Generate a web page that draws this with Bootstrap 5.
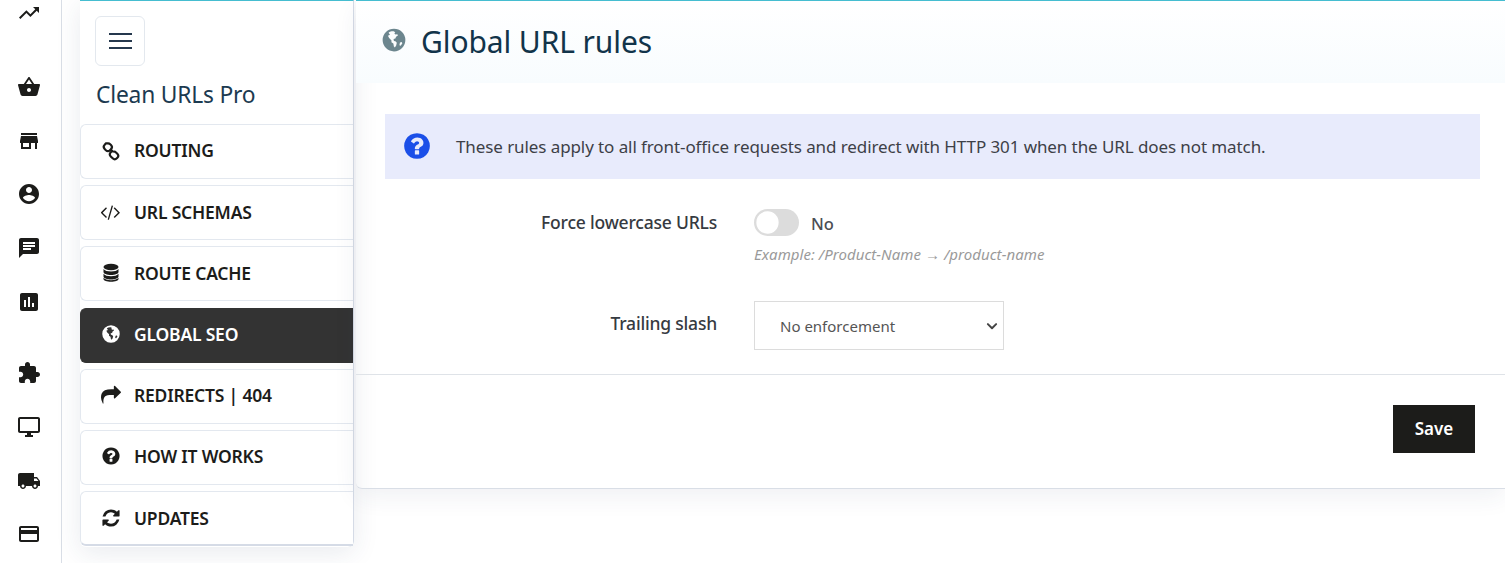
<!DOCTYPE html>
<html lang="en">
<head>
    <meta charset="UTF-8">
    <meta name="viewport" content="width=device-width, initial-scale=1.0">
    <title>Clean URLs Pro</title>
    <link href="https://cdn.jsdelivr.net/npm/bootstrap@5.3.0/dist/css/bootstrap.min.css" rel="stylesheet">
    <style>
        html, body { height: 563px; overflow: hidden; }
        body {
            font-family: "Noto Sans", "Open Sans", sans-serif;
            background: #fff;
            color: #363a41;
        }
        .rail {
            width: 62px;
            height: 563px;
            border-right: 1px solid #d9dee6;
            padding: 1px 3px 0 0;
        }
        .rail-item { height: 53.7px; color: #1c1c1a; flex: none; }
        .rail-item svg { width: 24px; height: 24px; fill: currentColor; }
        .rail-item.first { height: 27px; align-items: flex-start !important; }
        .rail-item.group-a { margin-top: 32px; }
        .rail-item.group-b { margin-top: 18px; }
        .side {
            width: 274px;
            margin-left: 18px;
            height: 547px;
            border-top: 1px solid #45bdd0;
            border-right: 1px solid #d5dbe6;
            border-radius: 0 0 6px 6px;
            box-shadow: 0 6px 26px rgba(40, 60, 100, .10);
            flex: none;
        }
        .burger {
            width: 50px;
            height: 50px;
            margin: 15px 0 0 15px;
            border: 1px solid #e3e8ee;
            border-radius: 6px;
            background: #fff;
        }
        .burger span { display: block; width: 23px; height: 2px; background: #25384d; margin: 2.5px auto; }
        .side-title {
            font-size: 22.8px;
            font-weight: 400;
            color: #1c3a50;
            margin: 13px 0 13px 16px;
            line-height: 32px;
            letter-spacing: -.2px;
        }
        .side-link {
            height: 55px;
            margin-bottom: 6.2px;
            padding: 0 0 2px 20px;
            border: 1px solid #e3e8ef;
            border-right: 0;
            border-radius: 6px 0 0 6px;
            background: #fff;
            color: #1c1c1a;
            font-size: 17.5px;
            font-weight: 600;
            text-decoration: none;
            letter-spacing: -.2px;
        }
        .side-link svg { width: 20px; height: 20px; fill: currentColor; margin-right: 13px; flex: none; }
        .side-link.active { background: #333; border-color: #333; color: #fff; }
        .side-link:last-child { margin-bottom: 0; padding-bottom: 0; border-bottom-width: 2px; border-bottom-color: #d5dbe6; }
        .main {
            height: 489px;
            margin-left: 2px;
            border-top: 1px solid #45bdd0;
            border-bottom: 1px solid #d9dee6;
            border-radius: 0 0 0 6px;
            box-shadow: 0 8px 24px rgba(40, 60, 100, .07);
            min-width: 0;
        }
        .main-head {
            height: 82px;
            padding-left: 25px;
            background: linear-gradient(#fff, #f8fcfe);
        }
        .main-head svg { width: 26px; height: 26px; fill: #6c868e; margin-right: 14px; margin-top: -4px; }
        .main-head h1 {
            font-size: 30px;
            font-weight: 400;
            color: #12344a;
            margin: 0;
            letter-spacing: -.1px;
        }
        .note {
            margin: 31px 25px 0 29px;
            height: 65px;
            background: #e8ebfc;
            border: 0;
            border-radius: 0;
            padding: 0 0 0 17px;
            font-size: 17px;
            color: #3d4047;
            letter-spacing: -.09px;
        }
        .note svg { width: 30px; height: 30px; fill: #1b4fe8; margin-right: 24px; flex: none; }
        .field-label {
            width: 361px;
            text-align: right;
            font-size: 17.5px;
            font-weight: 500;
            color: #363a41;
            padding: 0;
            margin: 0 37px 0 0;
            flex: none;
            letter-spacing: -.2px;
        }
        .field-switch { margin-top: 30px; }
        .field-select { margin-top: 36px; }
        .field-select .field-label { padding-bottom: 4px; }
        .form-switch { padding: 0; margin: 0; min-height: 0; }
        .form-switch .form-check-input {
            width: 45px;
            height: 27px;
            margin: 0;
            float: none;
            background-color: #dcdcdc;
            border: 0;
            background-image: url("data:image/svg+xml,%3csvg xmlns='http://www.w3.org/2000/svg' viewBox='-4 -4 8 8'%3e%3ccircle r='3.3' fill='%23fff'/%3e%3c/svg%3e");
            background-position: left center;
        }
        .switch-text { font-size: 16.5px; font-weight: 500; color: #4b4e55; margin: 3px 0 0 12px; }
        .hint { font-size: 15px; font-style: italic; color: #9a9a9a; margin-top: 6px; letter-spacing: .05px; }
        .form-select {
            width: 250px;
            height: 49px;
            border: 1px solid #dcdcdc;
            border-radius: 0;
            padding: 8px 36px 6px 25px;
            font-size: 15px;
            color: #555;
            background-image: url("data:image/svg+xml,%3csvg xmlns='http://www.w3.org/2000/svg' viewBox='0 0 16 16'%3e%3cpath fill='none' stroke='%23444' stroke-linecap='round' stroke-linejoin='round' stroke-width='2.6' d='M2.5 5.500l5.500 5.500 5.500-5.500'/%3e%3c/svg%3e");
            background-size: 12px 12px;
            background-position: right 5px center;
        }
        .main-foot { border-top: 1px solid #dfe3e8; margin-top: 24px; height: 114px; padding: 30px 30px 0 0; }
        .btn-save {
            width: 82px;
            height: 48px;
            background: #1c1c1a;
            border: 0;
            border-radius: 0;
            color: #fff;
            font-size: 17px;
            font-weight: 600;
        }
        .btn-save:hover { background: #1c1c1a; color: #fff; }
    </style>
</head>
<body class="d-flex">
    <svg width="0" height="0" class="position-absolute">
        <symbol id="i-globe" viewBox="0 0 24 24">
            <path fill-rule="evenodd" d="M12 1.500a10.500 10.500 0 1 0 0 21 10.500 10.500 0 0 0 0-21zM7 5.200c1.300-.9 3-1.400 4.600-1.200l1.600.9-.9.9 1 1.100 1.800-.3.5 1.300-1.700 1.200-.6 1.600-1.700.3.3 1.900 1.400.2 1.300 1.500-.6 2.500-1.200 1.900-.9-1.100-.5-2.600-1.800-1.200.1-1.700-2.200-2.300L6.400 8l1.900-.8zM17.500 14.200l1.600-.3.6 1-1.500 2.300-1.200-.4z"/>
        </symbol>
        <symbol id="i-link" viewBox="0 0 24 24">
            <g fill="none" stroke="currentColor" stroke-width="2.600" stroke-linecap="round">
                <path d="M11.700 10.300l2 2"/>
                <path d="M6 2.800h2.400a3.600 3.600 0 0 1 2.600 1l1 1a3.600 3.600 0 0 1 0 5l-1.200 1.200a3.600 3.600 0 0 1-5 0l-1.400-1.400a3.600 3.600 0 0 1 0-5z"/>
                <path d="M15.600 12.800l1.400.1 2.600 2.300a3.600 3.600 0 0 1 0 5l-.6.6a3.600 3.600 0 0 1-5 0l-2.300-2.300a3.600 3.600 0 0 1 0-5l1-1"/>
            </g>
        </symbol>
        <symbol id="i-db" viewBox="0 0 24 24">
            <ellipse cx="12" cy="4.800" rx="9" ry="3.800"/>
            <path d="M3 7.300v3.500c0 2 4 3.600 9 3.600s9-1.600 9-3.600V7.300c-1.300 2-5 3-9 3s-7.700-1-9-3z"/>
            <path d="M3 12.800v3.400c0 2 4 3.600 9 3.600s9-1.600 9-3.600v-3.400c-1.300 2-5 3-9 3s-7.700-1-9-3z"/>
            <path d="M3 17.700v1.500c0 2 4 3.300 9 3.300s9-1.300 9-3.300v-1.500c-1.300 2-5 3-9 3s-7.700-1-9-3z"/>
        </symbol>
        <symbol id="i-help" viewBox="0 0 1792 1792">
            <path d="M1024 1376v-192q0-14-9-23t-23-9h-192q-14 0-23 9t-9 23v192q0 14 9 23t23 9h192q14 0 23-9t9-23zm256-672q0-88-55.500-163t-138.500-116-170-41q-243 0-371 213-15 24 8 42l132 100q7 6 19 6 16 0 25-12 53-68 86-92 34-24 86-24 48 0 85.500 26t37.500 59q0 38-20 61t-68 45q-63 28-115.500 86.500t-52.500 125.500v36q0 14 9 23t23 9h192q14 0 23-9t9-23q0-19 21.500-49.500t54.500-49.500q32-18 49-28.500t46-35 44.500-48 28-60.500 12.500-81zm384 192q0 209-103 385.500t-279.500 279.500-385.500 103-385.500-103-279.500-279.500-103-385.500 103-385.500 279.500-279.500 385.500-103 385.500 103 279.500 279.500 103 385.500z"/>
        </symbol>
    </svg>

    <nav class="rail d-flex flex-column flex-shrink-0">
        <a class="rail-item first d-flex justify-content-center align-items-center"><svg viewBox="0 0 24 24"><path d="M16 6l2.290 2.290-4.880 4.880-4-4L2 16.590 3.410 18l6-6 4 4 6.300-6.290L22 12V6z"/></svg></a>
        <a class="rail-item group-a d-flex justify-content-center align-items-center"><svg viewBox="0 0 24 24"><path d="M17.210 9l-4.380-6.560c-.19-.28-.51-.42-.83-.42-.32 0-.64.14-.83.43L6.790 9H2c-.55 0-1 .45-1 1 0 .09.01.18.04.27l2.540 9.270c.23.84 1 1.460 1.920 1.460h13c.92 0 1.690-.62 1.930-1.460l2.540-9.270L23 10c0-.55-.45-1-1-1h-4.790zM9 9l3-4.400L15 9H9zm3 8c-1.100 0-2-.9-2-2s.9-2 2-2 2 .9 2 2-.9 2-2 2z"/></svg></a>
        <a class="rail-item d-flex justify-content-center align-items-center"><svg viewBox="0 0 24 24"><path d="M20 4H4v2h16V4zm1 10v-2l-1-5H4l-1 5v2h1v6h10v-6h4v6h2v-6h1zm-9 4H6v-4h6v4z"/></svg></a>
        <a class="rail-item d-flex justify-content-center align-items-center"><svg viewBox="0 0 24 24"><path d="M12 2C6.480 2 2 6.480 2 12s4.480 10 10 10 10-4.480 10-10S17.520 2 12 2zm0 3c1.660 0 3 1.340 3 3s-1.340 3-3 3-3-1.340-3-3 1.340-3 3-3zm0 14.200c-2.500 0-4.710-1.280-6-3.220.03-1.990 4-3.080 6-3.080 1.990 0 5.970 1.090 6 3.080-1.290 1.940-3.500 3.220-6 3.220z"/></svg></a>
        <a class="rail-item d-flex justify-content-center align-items-center"><svg viewBox="0 0 24 24"><path d="M20 2H4c-1.100 0-1.990.9-1.990 2L2 22l4-4h14c1.100 0 2-.9 2-2V4c0-1.100-.9-2-2-2zM6 9h12v2H6V9zm8 5H6v-2h8v2zm4-6H6V6h12v2z"/></svg></a>
        <a class="rail-item d-flex justify-content-center align-items-center"><svg viewBox="0 0 24 24"><path d="M19 3H5c-1.100 0-2 .9-2 2v14c0 1.100.9 2 2 2h14c1.100 0 2-.9 2-2V5c0-1.100-.9-2-2-2zM9 17H7v-7h2v7zm4 0h-2V7h2v10zm4 0h-2v-4h2v4z"/></svg></a>
        <a class="rail-item group-b d-flex justify-content-center align-items-center"><svg viewBox="0 0 24 24"><path d="M20.500 11H19V7c0-1.100-.9-2-2-2h-4V3.500C13 2.120 11.880 1 10.500 1S8 2.120 8 3.500V5H4c-1.100 0-1.990.9-1.990 2v3.800H3.500c1.490 0 2.700 1.210 2.700 2.700s-1.210 2.700-2.700 2.700H2V20c0 1.100.9 2 2 2h3.800v-1.500c0-1.490 1.210-2.700 2.700-2.700 1.490 0 2.700 1.210 2.700 2.700V22H17c1.100 0 2-.9 2-2v-4h1.500c1.380 0 2.500-1.120 2.500-2.500S21.880 11 20.500 11z"/></svg></a>
        <a class="rail-item d-flex justify-content-center align-items-center"><svg viewBox="0 0 24 24"><path d="M21 2H3c-1.100 0-2 .9-2 2v12c0 1.100.9 2 2 2h7v2H8v2h8v-2h-2v-2h7c1.100 0 2-.9 2-2V4c0-1.100-.9-2-2-2zm0 14H3V4h18v12z"/></svg></a>
        <a class="rail-item d-flex justify-content-center align-items-center"><svg viewBox="0 0 24 24"><path d="M20 8h-3V4H3c-1.100 0-2 .9-2 2v11h2c0 1.660 1.340 3 3 3s3-1.340 3-3h6c0 1.660 1.340 3 3 3s3-1.340 3-3h2v-5l-3-4zM6 18.500c-.83 0-1.500-.67-1.500-1.500s.67-1.500 1.500-1.500 1.500.67 1.500 1.500-.67 1.500-1.500 1.500zm13.500-9l1.960 2.500H17V9.500h2.500zm-1.500 9c-.83 0-1.500-.67-1.500-1.500s.67-1.500 1.500-1.500 1.500.67 1.500 1.500-.67 1.500-1.500 1.500z"/></svg></a>
        <a class="rail-item d-flex justify-content-center align-items-center"><svg viewBox="0 0 24 24"><path d="M20 4H4c-1.110 0-1.990.89-1.990 2L2 18c0 1.110.89 2 2 2h16c1.110 0 2-.89 2-2V6c0-1.110-.89-2-2-2zm0 14H4v-6h16v6zm0-10H4V6h16v2z"/></svg></a>
    </nav>

    <aside class="side d-flex flex-column">
        <button class="burger d-flex flex-column justify-content-center p-0" type="button" aria-label="Menu"><span></span><span></span><span></span></button>
        <h2 class="side-title">Clean URLs Pro</h2>
        <div class="nav flex-column">
            <a class="side-link d-flex align-items-center" href="#"><svg><use href="#i-link"/></svg>ROUTING</a>
            <a class="side-link d-flex align-items-center" href="#"><svg viewBox="0 0 1920 1792"><path d="M553 1399l-50 50q-10 10-23 10t-23-10l-466-466q-10-10-10-23t10-23l466-466q10-10 23-10t23 10l50 50q10 10 10 23t-10 23l-393 393 393 393q10 10 10 23t-10 23zm591-1067l-373 1291q-4 13-15.500 19.500t-23.500 2.500l-62-17q-13-4-19.500-15.500t-2.500-24.500l373-1291q4-13 15.500-19.500t23.500-2.500l62 17q13 4 19.500 15.500t2.500 24.500zm657 651l-466 466q-10 10-23 10t-23-10l-50-50q-10-10-10-23t10-23l393-393-393-393q-10-10-10-23t10-23l50-50q10-10 23-10t23 10l466 466q10 10 10 23t-10 23z"/></svg>URL SCHEMAS</a>
            <a class="side-link d-flex align-items-center" href="#"><svg><use href="#i-db"/></svg>ROUTE CACHE</a>
            <a class="side-link active d-flex align-items-center" href="#"><svg><use href="#i-globe"/></svg>GLOBAL SEO</a>
            <a class="side-link d-flex align-items-center" href="#"><svg viewBox="0 0 1792 1792"><path d="M1792 640q0 26-19 45l-512 512q-19 19-45 19t-45-19-19-45v-256h-224q-98 0-175.500 6t-154 21.500-133 42.500-105.500 69.500-80 101-48.500 138.500-17.500 181q0 55 5 123 0 6 2.500 23.500t2.500 26.500q0 15-8.500 25t-23.500 10q-16 0-28-17-7-9-13-22t-13.500-30-10.500-24q-127-285-127-451 0-199 53-333 162-403 875-403h224v-256q0-26 19-45t45-19 45 19l512 512q19 19 19 45z"/></svg>REDIRECTS | 404</a>
            <a class="side-link d-flex align-items-center" href="#"><svg><use href="#i-help"/></svg>HOW IT WORKS</a>
            <a class="side-link d-flex align-items-center" href="#"><svg viewBox="0 0 1792 1792"><path d="M1639 1056q0 5-1 7-64 268-268 434.500t-478 166.500q-146 0-282.500-55t-243.500-157l-129 129q-19 19-45 19t-45-19-19-45v-448q0-26 19-45t45-19h448q26 0 45 19t19 45-19 45l-137 137q71 66 161 102t187 36q134 0 250-65t186-179q11-17 53-117 8-23 30-23h192q13 0 22.500 9.500t9.500 22.500zm25-800v448q0 26-19 45t-45 19h-448q-26 0-45-19t-19-45 19-45l138-138q-148-137-349-137-134 0-250 65t-186 179q-11 17-53 117-8 23-30 23h-199q-13 0-22.500-9.500t-9.500-22.500v-7q65-268 270-434.500t480-166.500q146 0 284 55.500t245 156.500l130-129q19-19 45-19t45 19 19 45z"/></svg>UPDATES</a>
        </div>
    </aside>

    <main class="main flex-grow-1 d-flex flex-column">
        <header class="main-head d-flex align-items-center">
            <svg><use href="#i-globe"/></svg>
            <h1>Global URL rules</h1>
        </header>

        <div class="alert note d-flex align-items-center" role="alert">
            <svg><use href="#i-help"/></svg>
            <span>These rules apply to all front-office requests and redirect with HTTP 301 when the URL does not match.</span>
        </div>

        <form class="flex-grow-1 d-flex flex-column">
            <div class="d-flex align-items-start field-switch">
                <label class="field-label form-label" for="lowercase">Force lowercase URLs</label>
                <div>
                    <div class="form-check form-switch d-flex align-items-center">
                        <input class="form-check-input" type="checkbox" role="switch" id="lowercase">
                        <span class="switch-text">No</span>
                    </div>
                    <div class="hint">Example: /Product-Name → /product-name</div>
                </div>
            </div>
            <div class="d-flex align-items-center field-select">
                <label class="field-label form-label" for="slash">Trailing slash</label>
                <select class="form-select" id="slash">
                    <option>No enforcement</option>
                    <option>Always add</option>
                    <option>Always remove</option>
                </select>
            </div>
            <div class="main-foot d-flex justify-content-end align-items-start">
                <button class="btn btn-save" type="button">Save</button>
            </div>
        </form>
    </main>

    <script src="https://cdn.jsdelivr.net/npm/bootstrap@5.3.0/dist/js/bootstrap.bundle.min.js"></script>
</body>
</html>
